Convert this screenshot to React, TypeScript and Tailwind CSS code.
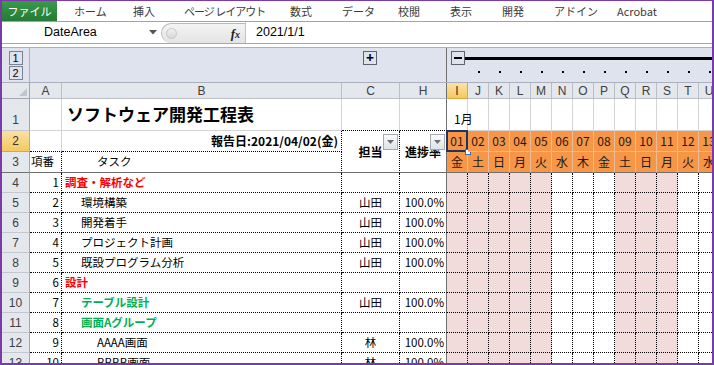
import React from "react";

type Task = {
  no: number;
  name: string;
  tone?: "red" | "green";
  indent: 0 | 1 | 2;
  who?: string;
  pct?: string;
};

const tasks: Task[] = [
  { no: 1, name: "調査・解析など", tone: "red", indent: 0 },
  { no: 2, name: "環境構築", indent: 1, who: "山田", pct: "100.0%" },
  { no: 3, name: "開発着手", indent: 1, who: "山田", pct: "100.0%" },
  { no: 4, name: "プロジェクト計画", indent: 1, who: "山田", pct: "100.0%" },
  { no: 5, name: "既設プログラム分析", indent: 1, who: "山田", pct: "100.0%" },
  { no: 6, name: "設計", tone: "red", indent: 0 },
  { no: 7, name: "テーブル設計", tone: "green", indent: 1, who: "山田", pct: "100.0%" },
  { no: 8, name: "画面Aグループ", tone: "green", indent: 1 },
  { no: 9, name: "AAAA画面", indent: 2, who: "林", pct: "100.0%" },
  { no: 10, name: "BBBB画面", indent: 2, who: "林", pct: "100.0%" },
];

const dayCols = ["I", "J", "K", "L", "M", "N", "O", "P", "Q", "R", "S", "T", "U"];
const weekdays = ["金", "土", "日", "月", "火", "水", "木", "金", "土", "日", "月", "火", "水"];
// new year + 3-day weekend get the pink fill
const off = [true, true, true, true, true, false, false, false, true, true, true, false, false];

const tabs = [
  { label: "ホーム", w: "w-[59px]" },
  { label: "挿入", w: "w-[51px]" },
  { label: "ページ レイアウト", w: "w-[106px]" },
  { label: "数式", w: "w-[52px]" },
  { label: "データ", w: "w-[56px]" },
  { label: "校閲", w: "w-[52px]" },
  { label: "表示", w: "w-[52px]" },
  { label: "開発", w: "w-[52px]" },
  { label: "アドイン", w: "w-[63px]" },
  { label: "Acrobat", w: "w-[80px]" },
];

const jp = "font-['Noto_Sans_CJK_JP',sans-serif]";
const ui = "font-['Liberation_Sans','Noto_Sans_CJK_JP',sans-serif]";

const Caret = () => (
  <svg width="8" height="5" viewBox="0 0 8 5">
    <polygon points="0,0 8,0 4,4.5" fill="#555" />
  </svg>
);

const FilterButton = () => (
  <div className="absolute right-[1px] top-[3px] w-[15px] h-[16px] border border-[#a6a9b0] bg-gradient-to-b from-[#fbfbfb] to-[#dfe2e7] flex items-center justify-center">
    <svg width="7" height="4" viewBox="0 0 7 4">
      <polygon points="0,0 7,0 3.5,4" fill="#6b6f77" />
    </svg>
  </div>
);

const OutlineBox = ({ children }: { children: React.ReactNode }) => (
  <div className={`w-[14px] h-[14px] border border-[#7d8290] flex items-center justify-center text-[11px] leading-none text-black ${ui}`}>
    {children}
  </div>
);

export default function App() {
  return (
    <div className="w-[714px] h-[365px] overflow-hidden bg-white border-x-2 border-b-2 border-t border-[#7a3aa8] flex flex-col">
      {/* ribbon tabs */}
      <div className={`flex h-[21px] shrink-0 items-stretch border-b border-[#a3a3a3] ${jp}`}>
        <div className="w-[55px] shrink-0 bg-gradient-to-b from-[#3a9a4a] to-[#237b35] text-white text-[11px] flex items-center justify-center">
          ファイル
        </div>
        <div className="flex ml-[17px] items-center text-[11px] text-[#3b3b3b]">
          {tabs.map((t) => (
            <div key={t.label} className={`${t.w} shrink-0 whitespace-nowrap ${t.label.includes("レイアウト") ? "tracking-[-1px]" : ""}`}>
              {t.label}
            </div>
          ))}
        </div>
      </div>

      {/* formula bar */}
      <div className={`flex h-[22px] shrink-0 items-stretch border-b border-[#a8a8a8] ${ui}`}>
        <div className="w-[159px] shrink-0 flex items-center justify-between pl-[42px] pr-[4px] text-[12.5px] text-black">
          <span>DateArea</span>
          <Caret />
        </div>
        <div className="w-[84px] shrink-0 mt-[1px] rounded-l-[11px] border-l border-t border-[#b9b9b9] bg-gradient-to-b from-[#f4f4f4] to-[#e4e4e4] flex items-center justify-between pl-[4px] pr-[5px]">
          <div className="w-[11px] h-[11px] rounded-full border border-[#c6c6c6] bg-gradient-to-b from-[#f2f2f2] to-[#d6d6d6]" />
          <span className="font-['Liberation_Serif',serif] italic font-bold text-[13px] text-[#222] leading-none">
            f<span className="text-[10px]">x</span>
          </span>
        </div>
        <div className="flex-1 border-l border-[#c4c4c4] flex items-center pl-[10px] text-[12.5px] text-black">
          2021/1/1
        </div>
      </div>

      <div className="h-[3px] shrink-0" />

      {/* outline area */}
      <div className="flex h-[35px] shrink-0 bg-[#dfe3ee] border-t border-[#a9afbd]">
        <div className="w-[28px] shrink-0 border-r border-[#a9afbd] flex flex-col items-center pt-[3px] gap-[1px]">
          <OutlineBox>1</OutlineBox>
          <OutlineBox>2</OutlineBox>
        </div>
        <div className="w-[417px] shrink-0 border-r border-[#6f6f6f] pl-[333px] pt-[3px]">
          <div className="w-[14px] h-[14px] border border-[#5d6170] flex items-center justify-center text-[14px] font-bold leading-none">+</div>
        </div>
        <div className="flex-1 min-w-0 overflow-hidden flex flex-col">
          <div className="flex items-center pl-[4px] pt-[3px]">
            <div className="w-[14px] h-[14px] shrink-0 border border-[#5d6170] flex items-center justify-center">
              <div className="w-[8px] h-[2px] bg-black" />
            </div>
            <div className="flex-1 h-[3px] bg-black" />
          </div>
          <div className="flex pl-[21px] mt-[6px]">
            {dayCols.slice(1).map((c) => (
              <div key={c} className="w-[21px] shrink-0 flex justify-center">
                <div className="w-[2px] h-[2px] bg-black" />
              </div>
            ))}
          </div>
        </div>
      </div>

      {/* sheet */}
      <div
        className={`grid shrink-0 grid-cols-[28px_32px_280px_58px_47px_repeat(13,21px)] grid-rows-[16px_32px_21px_21px_repeat(10,20px)] border-t border-[#a9afbd] text-[11.5px] text-black ${jp}`}
      >
        {/* column headers */}
        <div className="bg-[#e4e7ec] border-r border-b border-[#9fa6b1] relative">
          <svg className="absolute right-[2px] bottom-[2px]" width="8" height="8" viewBox="0 0 8 8">
            <polygon points="8,0 8,8 0,8" fill="#c2c7cf" />
          </svg>
        </div>
        {["A", "B", "C"].map((c) => (
          <div key={c} className={`bg-[#e4e7ec] border-r border-b border-[#b9bec7] flex items-center justify-center text-[12px] text-[#404040] ${ui}`}>
            {c}
          </div>
        ))}
        <div className={`bg-[#e4e7ec] border-r border-b border-b-[#b9bec7] border-r-[#6f6f6f] flex items-center justify-center text-[12px] text-[#404040] ${ui}`}>
          H
        </div>
        {dayCols.map((c, i) => (
          <div
            key={c}
            className={
              i === 0
                ? `bg-gradient-to-b from-[#fbe3a3] to-[#f5c85c] border-r border-b border-[#d9a843] flex items-center justify-center text-[12px] text-[#333] ${ui}`
                : `bg-[#e4e7ec] border-r border-b border-[#b9bec7] flex items-center justify-center text-[12px] text-[#404040] ${ui}`
            }
          >
            {c}
          </div>
        ))}

        {/* row 1 */}
        <div className={`bg-[#e4e7ec] border-r border-b border-r-[#9fa6b1] border-b-[#c3c8d0] flex items-center justify-center text-[12px] text-[#404040] pt-[10px] ${ui}`}>1</div>
        <div className="border-r border-b border-[#d4d4d4]" />
        <div className="border-r border-b border-[#d4d4d4] flex items-center pl-[5px] pb-[2px] text-[17px] font-bold whitespace-nowrap">
          ソフトウェア開発工程表
        </div>
        <div className="border-r border-b border-r-[#d4d4d4] border-b-black [border-bottom-style:dotted]" />
        <div className="border-r border-b border-r-[#6f6f6f] border-b-black [border-bottom-style:dotted]" />
        {dayCols.map((c, i) => (
          <div key={c} className="border-r border-b border-[#d4d4d4] relative">
            {i === 0 && (
              <span className="absolute left-[7px] bottom-[2px] whitespace-nowrap text-[12px]">1月</span>
            )}
          </div>
        ))}

        {/* rows 2-3 */}
        <div className={`bg-gradient-to-b from-[#fbe0a0] to-[#f5c95e] border-r border-b border-[#d9a843] flex items-center justify-center text-[12px] text-[#333] ${ui}`}>2</div>
        <div className="border-r border-b border-r-[#d4d4d4] border-b-black [border-bottom-style:dotted]" />
        <div className="border-r border-b border-dotted border-black flex items-center justify-end pr-[3px] font-bold text-[12px] whitespace-nowrap">
          報告日:2021/04/02(金)
        </div>
        <div className="row-span-2 relative border-r border-b border-r-black border-b-[#6f6f6f] [border-right-style:dotted] flex items-center justify-center font-bold text-[12px]">
          担当
          <FilterButton />
        </div>
        <div className="row-span-2 relative border-r border-b border-[#6f6f6f] flex items-center justify-center font-bold text-[12px] whitespace-nowrap">
          進捗率
          <FilterButton />
        </div>
        {dayCols.map((c, i) => (
          <div key={c} className="relative bg-[#f79646] border-r border-b border-[#e9bd99] flex items-center justify-center text-[12px] text-[#1a1a1a]">
            {String(i + 1).padStart(2, "0")}
            {i === 0 && (
              <>
                <div className="absolute -left-px -top-px w-[22px] h-[22px] border-2 border-[#1d365f]" />
                <div className="absolute right-[-4px] bottom-[-4px] w-[6px] h-[6px] bg-white border-[1.5px] border-[#2f6db5]" />
              </>
            )}
          </div>
        ))}

        <div className={`bg-[#e4e7ec] border-r border-b border-r-[#9fa6b1] border-b-[#6f6f6f] flex items-center justify-center text-[12px] text-[#404040] ${ui}`}>3</div>
        <div className="border-r border-b border-r-black border-b-[#6f6f6f] [border-right-style:dotted] flex items-center pl-[1px] whitespace-nowrap">
          項番
        </div>
        <div className="border-r border-b border-r-black border-b-[#6f6f6f] [border-right-style:dotted] flex items-center pl-[35px]">
          タスク
        </div>
        {weekdays.map((w, i) => (
          <div key={i} className="bg-[#f79646] border-r border-b border-r-[#e9bd99] border-b-[#6f6f6f] flex items-center justify-center text-[12px] text-[#1a1a1a]">
            {w}
          </div>
        ))}

        {/* task rows */}
        {tasks.map((t, r) => (
          <React.Fragment key={t.no}>
            <div className={`bg-[#e4e7ec] border-r border-b border-r-[#9fa6b1] border-b-[#c3c8d0] flex items-center justify-center text-[12px] text-[#404040] ${ui}`}>
              {r + 4}
            </div>
            <div className="border-r border-b border-dotted border-black flex items-center justify-end pr-[2px]">{t.no}</div>
            <div
              className={`border-r border-b border-dotted border-black flex items-center whitespace-nowrap ${
                t.indent === 0 ? "pl-[3px]" : t.indent === 1 ? "pl-[19px]" : "pl-[35px]"
              } ${t.tone === "red" ? "text-[#ff0000] font-bold" : t.tone === "green" ? "text-[#00b050] font-bold" : ""}`}
            >
              {t.name}
            </div>
            <div className="border-r border-b border-dotted border-black flex items-center justify-center">{t.who}</div>
            <div className="border-r border-b border-r-[#6f6f6f] border-b-black [border-bottom-style:dotted] flex items-center justify-end pr-[2px]">
              {t.pct}
            </div>
            {dayCols.map((c, i) => (
              <div key={c} className={`border-r border-b border-dotted border-black ${off[i] ? "bg-[#f2dcdb]" : "bg-white"}`} />
            ))}
          </React.Fragment>
        ))}
      </div>
    </div>
  );
}
